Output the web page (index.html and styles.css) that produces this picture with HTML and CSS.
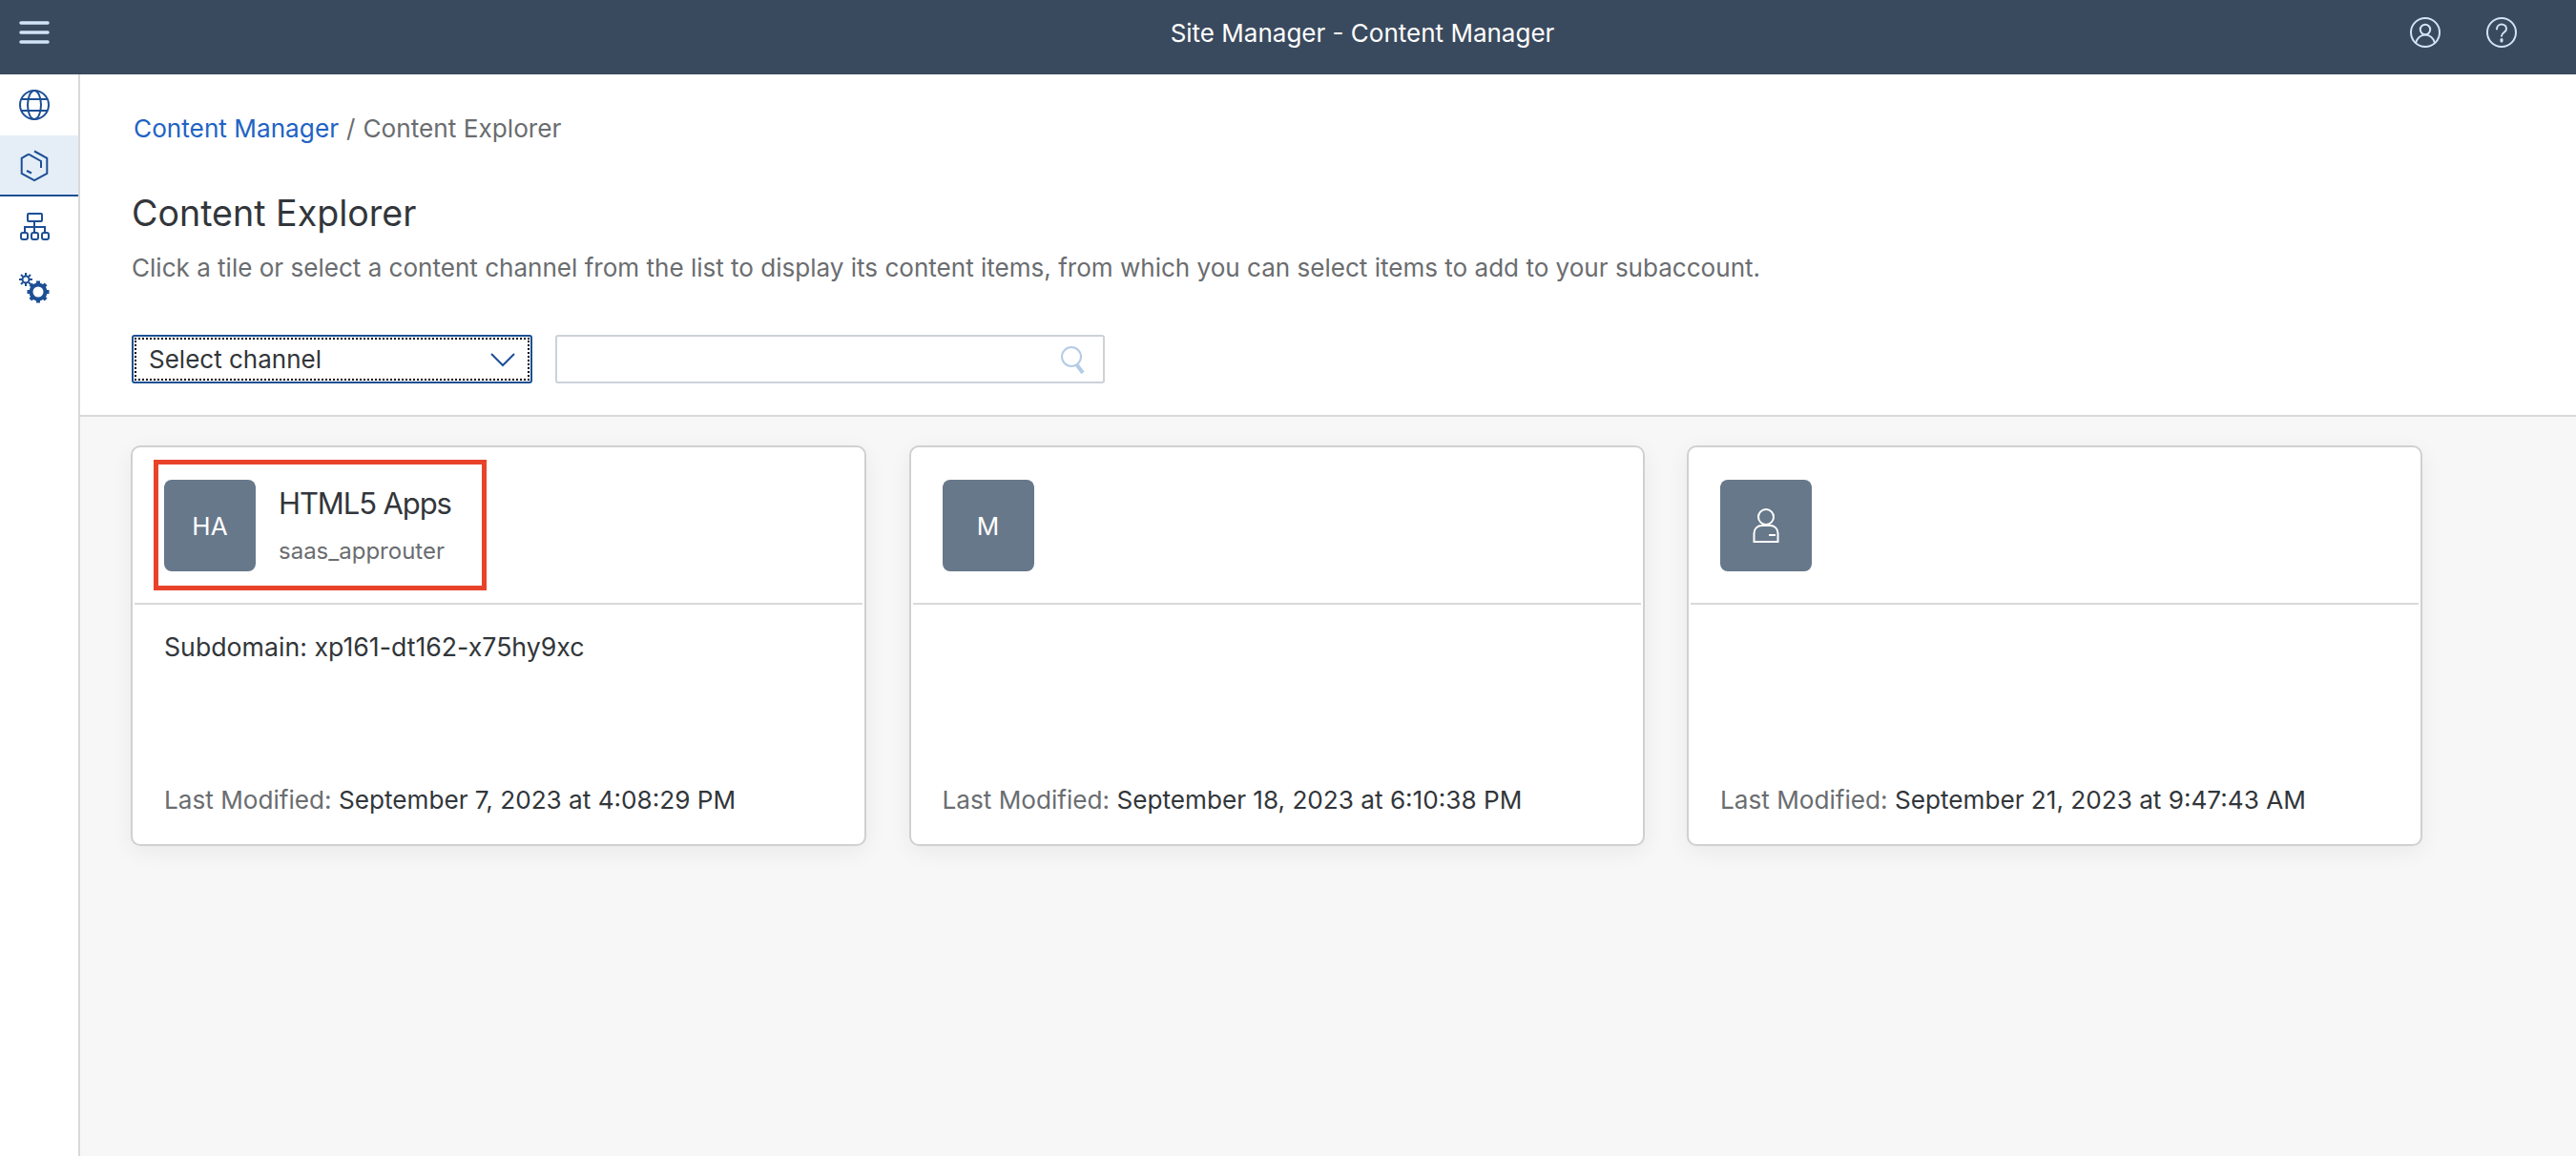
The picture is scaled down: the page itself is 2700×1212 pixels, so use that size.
FILE: index.html
```html
<!DOCTYPE html>
<html>
  <head>
    <meta charset="utf-8">
    <title>Site Manager - Content Manager</title>
    <link rel="stylesheet" href="styles.css">
  </head>
  <body>
    <!-- Top bar -->
    <header class="shell">
      <svg class="menuIcon" viewBox="0 0 32 24"><path d="M2 2h28M2 12h28M2 22h28"/></svg>
      <div class="shellTitle">Site Manager - Content Manager</div>
      <div class="shellActions">
        <svg class="shellIcon" viewBox="0 0 32 32"><circle cx="16" cy="16" r="15"/><circle cx="16" cy="13" r="5.200"/><path d="M6 27c1.500-5 5.500-8.500 10-8.500s8.500 3.500 10 8.500"/></svg>
        <svg class="shellIcon" viewBox="0 0 32 32"><circle cx="16" cy="16" r="15"/><path d="M11 12.500c0-3 2.200-5 5-5s5 2 5 4.700c0 3.800-5 3.800-5 7.600"/><path class="dot" d="M16 23.500v1.500"/></svg>
      </div>
    </header>

    <div class="main">
      <!-- Side navigation -->
      <nav class="sideNav">
        <div class="navItem">
          <svg class="navIcon" viewBox="0 0 32 32"><circle cx="16" cy="16" r="15"/><ellipse cx="16" cy="16" rx="7" ry="15"/><path d="M3 10h26M3 22h26"/></svg>
        </div>
        <div class="navItem navSelected">
          <svg class="navIcon" viewBox="0 0 32 32"><path d="M16 1.500l13.300 7.300v16L16 32.200 2.700 24.800v-16L10 4.600"/><path d="M10 4.600l13 7.400v7"/><path d="M8 22l5 2.500"/></svg>
        </div>
        <div class="navItem">
          <svg class="navIcon" viewBox="0 0 32 32"><rect x="9" y="2" width="15" height="8" rx="1"/><path d="M16 10v6M6 22v-6h21v6M16 16v6"/><rect x="2" y="22" width="7" height="7" rx="2"/><rect x="13" y="22" width="7" height="7" rx="2"/><rect x="24" y="22" width="7" height="7" rx="2"/></svg>
        </div>
        <div class="navItem">
          <svg class="navIcon" viewBox="0 0 32 32"><circle cx="7" cy="7" r="3.500"/><path class="teeth" d="M7 0v3M7 11v3M0 7h3M11 7h3M2 2l2 2M10 10l2 2M2 12l2-2M10 4l2-2"/><circle class="bigGear" cx="20" cy="20" r="7.500"/><path class="bigTeeth" d="M20 8.500v3M20 28.500v3M8.500 20h3M28.500 20h3M11.900 11.900l2.100 2.100M26 26l2.100 2.100M11.900 28.100l2.100-2.100M26 14l2.100-2.100"/></svg>
        </div>
      </nav>

      <div class="page">
        <section class="pageHead">
          <div class="breadcrumb"><a class="crumbLink">Content Manager</a><span class="crumbSep">/</span><span>Content Explorer</span></div>
          <h1 class="pageTitle">Content Explorer</h1>
          <p class="pageDesc">Click a tile or select a content channel from the list to display its content items, from which you can select items to add to your subaccount.</p>
          <div class="filters">
            <div class="selectBox">
              <div class="selectInner">
                <span>Select channel</span>
                <svg class="chevron" viewBox="0 0 26 16"><path d="M1 2l12 12L25 2"/></svg>
              </div>
            </div>
            <div class="searchBox">
              <svg class="searchIcon" viewBox="0 0 28 30"><circle cx="12" cy="12" r="10"/><path class="handle" d="M18 21l6 8"/></svg>
            </div>
          </div>
        </section>

        <section class="tiles">
          <article class="tile">
            <div class="tileHead">
              <div class="avatar">HA</div>
              <div class="tileNames">
                <div class="tileName">HTML5 Apps</div>
                <div class="tileSub">saas_approuter</div>
              </div>
              <div class="callout"></div>
            </div>
            <div class="tileBody">
              <div class="tileText">Subdomain: xp161-dt162-x75hy9xc</div>
              <div class="tileDate"><span class="dateLabel">Last Modified:</span> September 7, 2023 at 4:08:29 PM</div>
            </div>
          </article>

          <article class="tile">
            <div class="tileHead">
              <div class="avatar">M</div>
            </div>
            <div class="tileBody">
              <div class="tileText"></div>
              <div class="tileDate"><span class="dateLabel">Last Modified:</span> September 18, 2023 at 6:10:38 PM</div>
            </div>
          </article>

          <article class="tile">
            <div class="tileHead">
              <div class="avatar">
                <svg class="userIcon" viewBox="0 0 28 36"><circle cx="14" cy="9" r="8"/><path d="M1.500 35V26c0-5 4-8 8-8h9c4 0 8 3 8 8v9z"/><path d="M17 28h7"/></svg>
              </div>
            </div>
            <div class="tileBody">
              <div class="tileText"></div>
              <div class="tileDate"><span class="dateLabel">Last Modified:</span> September 21, 2023 at 9:47:43 AM</div>
            </div>
          </article>
        </section>
      </div>
    </div>
  </body>
</html>
```

FILE: styles.css
```css
* {
  box-sizing: border-box;
}

html, body {
  height: 100%;
}

body {
  margin: 0;
  display: flex;
  flex-direction: column;
  font-family: Inter, "Liberation Sans", sans-serif;
  color: #32363a;
  background: #ffffff;
  overflow: hidden;
}

/* Top bar */
.shell {
  height: 78px;
  flex: none;
  display: flex;
  align-items: center;
  justify-content: space-between;
  padding: 0 62px 10px 20px;
  background: #3a4a5e;
}

.menuIcon {
  width: 32px;
  height: 24px;
  fill: none;
  stroke: #d1e3f7;
  stroke-width: 3.500;
  stroke-linecap: round;
}

.shellTitle {
  flex: 1;
  text-align: center;
  color: #ffffff;
  font-size: 26px;
  padding-left: 278px;
}

.shellActions {
  display: flex;
  gap: 48px;
}

.shellIcon {
  width: 32px;
  height: 32px;
  fill: none;
  stroke: #d1e3f7;
  stroke-width: 2;
  stroke-linecap: round;
}

.shellIcon .dot {
  stroke-width: 3;
}

.main {
  flex: 1;
  display: flex;
  min-height: 0;
}

/* Side navigation */
.sideNav {
  width: 84px;
  flex: none;
  border-right: 2px solid #d9d9d9;
  background: #ffffff;
}

.navItem {
  height: 64px;
  display: flex;
  align-items: center;
  justify-content: center;
  padding-right: 10px;
}

.navSelected {
  background: #e5eef7;
  border-bottom: 2px solid #1d4f95;
}

.navIcon {
  width: 32px;
  height: 32px;
  fill: none;
  stroke: #1d4f95;
  stroke-width: 2;
  overflow: visible;
}

.navIcon .bigGear,
.navIcon .bigTeeth {
  stroke-width: 4;
}

/* Page */
.page {
  flex: 1;
  display: flex;
  flex-direction: column;
  background: #f7f7f7;
  min-width: 0;
}

.pageHead {
  height: 359px;
  flex: none;
  padding: 39px 54px 0;
  background: #ffffff;
  border-bottom: 2px solid #d9d9d9;
}

.breadcrumb {
  font-size: 26.200px;
  line-height: 36px;
  color: #6a6d70;
  margin-left: 2px;
}

.crumbLink {
  color: #2163c4;
}

.crumbSep {
  margin: 0 8px;
}

.pageTitle {
  margin: 47px 0 0;
  font-size: 37.600px;
  line-height: 48px;
  font-weight: 400;
}

.pageDesc {
  margin: 15px 0 0;
  font-size: 26.050px;
  line-height: 36px;
  color: #6a6d70;
}

.filters {
  display: flex;
  gap: 24px;
  margin-top: 52px;
}

.selectBox {
  width: 420px;
  height: 51px;
  padding: 1px;
  border: 2px solid #1d4f95;
  border-radius: 3px;
  background: #ffffff;
}

.selectInner {
  height: 100%;
  display: flex;
  align-items: center;
  justify-content: space-between;
  padding: 0 13px 0 13px;
  border: 2px dotted #000000;
  font-size: 26px;
}

.chevron {
  width: 26px;
  height: 16px;
  fill: none;
  stroke: #1d4f95;
  stroke-width: 2;
}

.searchBox {
  width: 576px;
  height: 51px;
  display: flex;
  align-items: center;
  justify-content: flex-end;
  padding-right: 17px;
  border: 2px solid #ccd2d8;
  border-radius: 3px;
  background: #ffffff;
}

.searchIcon {
  width: 28px;
  height: 30px;
  fill: none;
  stroke: #b3cbe6;
  stroke-width: 2;
}

.searchIcon .handle {
  stroke-width: 4;
}

/* Tiles */
.tiles {
  display: flex;
  gap: 44.500px;
  padding: 30px 53px;
}

.tile {
  width: 771px;
  height: 420px;
  display: flex;
  flex-direction: column;
  background: #ffffff;
  border: 2px solid #d0d0d0;
  border-radius: 10px;
  box-shadow: 0 6px 24px rgba(0, 0, 0, 0.06);
}

.tileHead {
  height: 165px;
  flex: none;
  display: flex;
  align-items: center;
  gap: 24px;
  margin: 0 2px;
  padding: 1px 31px 0;
  border-bottom: 2px solid #d9d9d9;
  position: relative;
}

.avatar {
  width: 96px;
  height: 96px;
  flex: none;
  display: flex;
  align-items: center;
  justify-content: center;
  background: #67788a;
  border-radius: 8px;
  color: #ffffff;
  font-size: 26px;
}

.userIcon {
  width: 28px;
  height: 36px;
  fill: none;
  stroke: #ffffff;
  stroke-width: 2;
}

.tileNames {
  display: flex;
  flex-direction: column;
  gap: 14px;
}

.tileName {
  font-size: 31px;
  line-height: 40px;
  letter-spacing: -1.100px;
}

.tileSub {
  font-size: 24px;
  line-height: 32px;
  color: #6a6d70;
}

/* Red box drawn over the first tile header */
.callout {
  position: absolute;
  left: 20px;
  top: 13px;
  width: 349px;
  height: 137px;
  border: 5px solid #e8432a;
}

.tileBody {
  flex: 1;
  display: flex;
  flex-direction: column;
  justify-content: space-between;
  padding: 26px 33px 28px;
}

.tileText {
  font-size: 26.700px;
  line-height: 36px;
}

.tileDate {
  font-size: 26.150px;
  line-height: 36px;
}

.dateLabel {
  color: #6a6d70;
}
```
